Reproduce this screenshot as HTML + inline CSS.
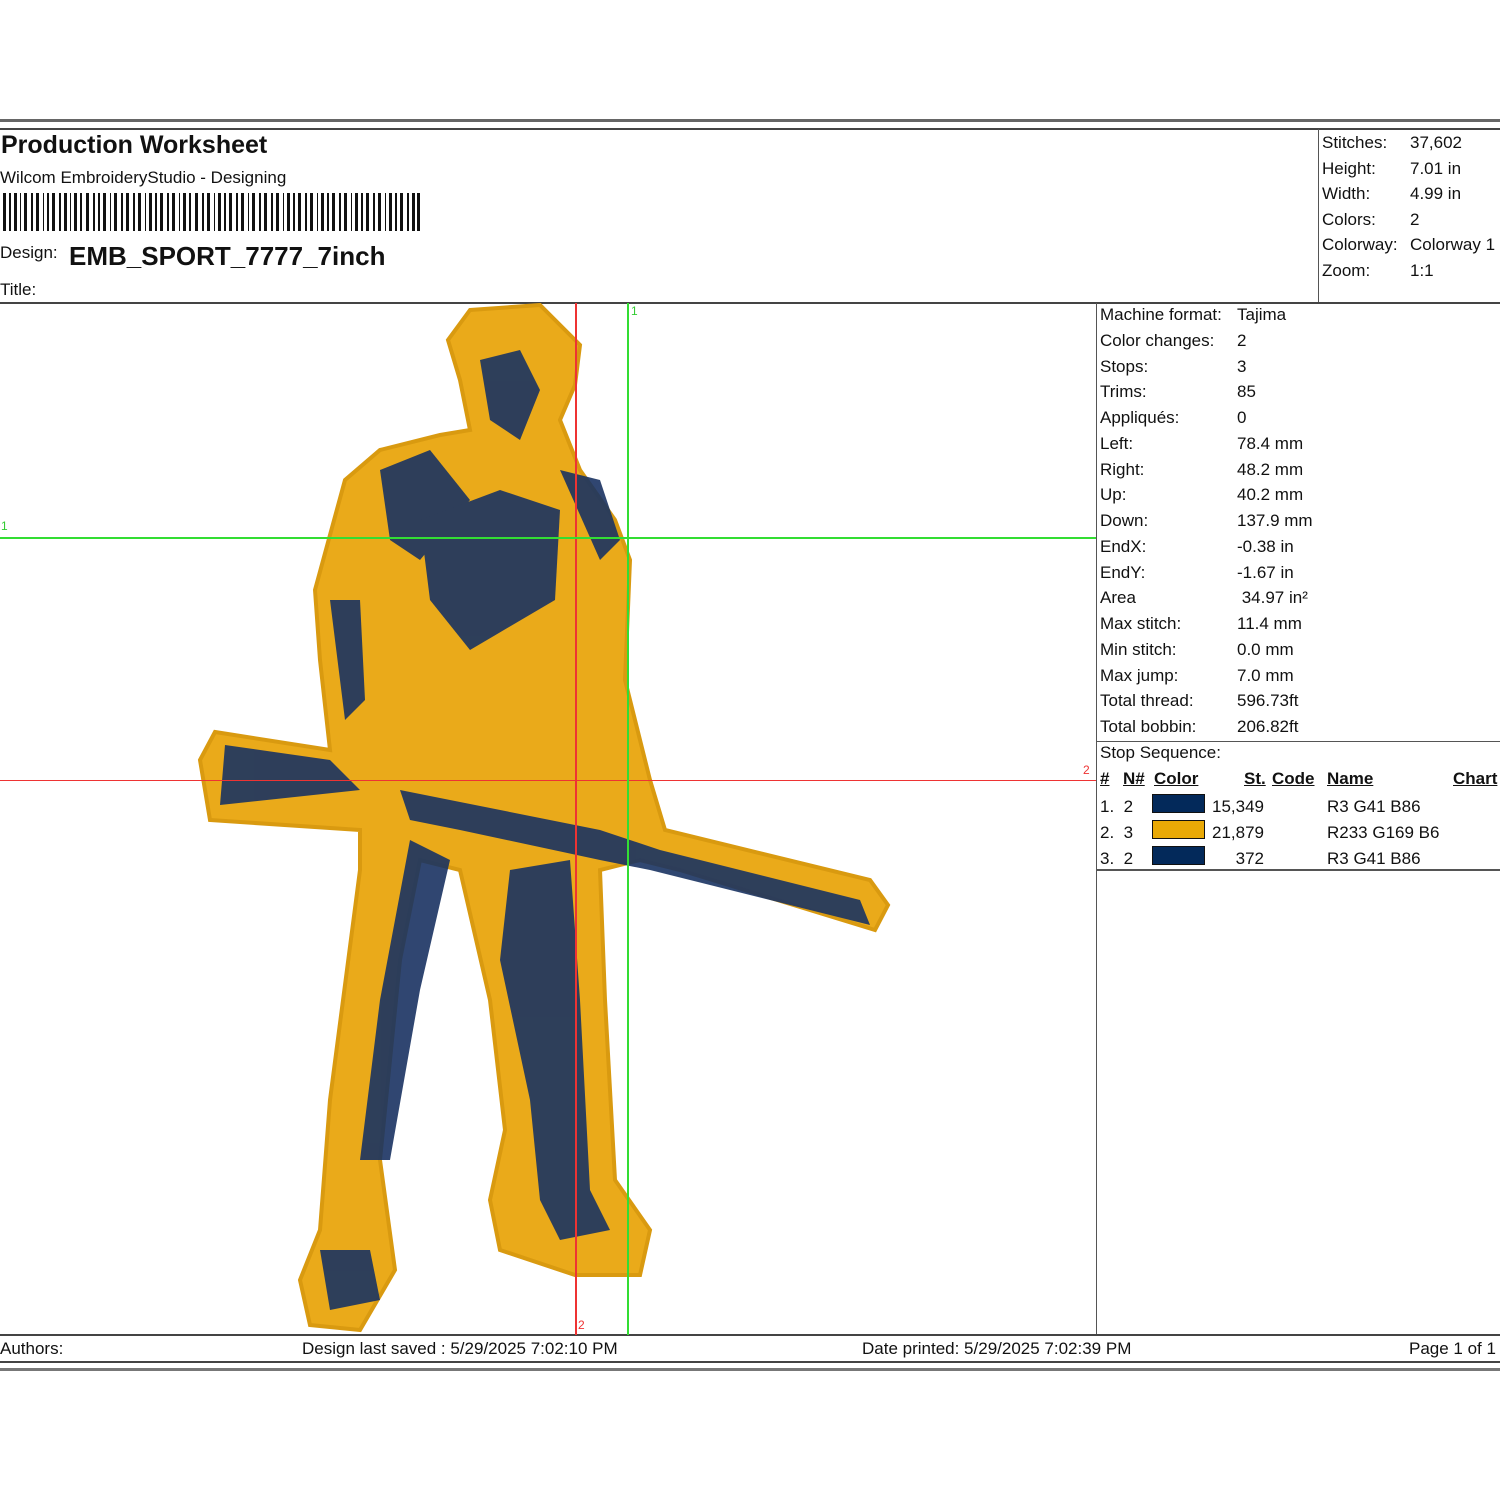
<!DOCTYPE html>
<html><head><meta charset="utf-8"><style>
body{margin:0;width:1500px;height:1495px;background:#fff;position:relative;overflow:hidden;font-family:"Liberation Sans",Arial,sans-serif;color:#111}
.a{position:absolute;white-space:nowrap}
.l{position:absolute;background:#555}
.t{font-size:17px}
u{text-decoration:underline}
</style></head><body>
<div class="l" style="left:0;top:119px;width:1500px;height:3px;background:#666"></div>
<div class="l" style="left:0;top:128px;width:1500px;height:2px;background:#444"></div>
<div class="l" style="left:1318px;top:129px;width:1px;height:175px"></div>
<div class="l" style="left:0;top:302px;width:1500px;height:2px;background:#444"></div>
<div class="l" style="left:1096px;top:303px;width:1px;height:1033px"></div>
<div class="l" style="left:1096px;top:741px;width:404px;height:1px"></div>
<div class="l" style="left:1096px;top:869px;width:404px;height:2px"></div>
<div class="l" style="left:0;top:1334px;width:1500px;height:2px;background:#444"></div>
<div class="l" style="left:0;top:1361px;width:1500px;height:2px;background:#444"></div>
<div class="l" style="left:0;top:1368px;width:1500px;height:3px;background:#777"></div>

<div class="a" style="left:1px;top:131px;font-size:25px;font-weight:bold">Production Worksheet</div>
<div class="a t" style="left:0;top:168px">Wilcom EmbroideryStudio - Designing</div>
<svg class="a" style="left:3px;top:193px" width="418" height="38">
<g fill="#111">
<rect x="0" width="3" height="38"/><rect x="6" width="2" height="38"/><rect x="11" width="3" height="38"/><rect x="17" width="1" height="38"/><rect x="21" width="3" height="38"/><rect x="28" width="2" height="38"/><rect x="33" width="3" height="38"/><rect x="40" width="1" height="38"/><rect x="44" width="2" height="38"/><rect x="49" width="3" height="38"/><rect x="56" width="2" height="38"/><rect x="61" width="3" height="38"/><rect x="67" width="1" height="38"/><rect x="71" width="3" height="38"/><rect x="77" width="2" height="38"/><rect x="83" width="3" height="38"/><rect x="90" width="2" height="38"/><rect x="95" width="2" height="38"/><rect x="100" width="3" height="38"/><rect x="107" width="1" height="38"/><rect x="111" width="3" height="38"/><rect x="118" width="2" height="38"/><rect x="123" width="3" height="38"/><rect x="130" width="2" height="38"/><rect x="135" width="3" height="38"/><rect x="142" width="1" height="38"/><rect x="146" width="3" height="38"/><rect x="152" width="2" height="38"/><rect x="157" width="3" height="38"/><rect x="164" width="2" height="38"/><rect x="169" width="3" height="38"/><rect x="176" width="1" height="38"/><rect x="180" width="3" height="38"/><rect x="186" width="2" height="38"/><rect x="192" width="3" height="38"/><rect x="199" width="2" height="38"/><rect x="204" width="3" height="38"/><rect x="211" width="1" height="38"/><rect x="215" width="3" height="38"/><rect x="221" width="2" height="38"/><rect x="226" width="3" height="38"/><rect x="233" width="2" height="38"/><rect x="238" width="3" height="38"/><rect x="245" width="1" height="38"/><rect x="249" width="3" height="38"/><rect x="256" width="2" height="38"/><rect x="261" width="3" height="38"/><rect x="268" width="2" height="38"/><rect x="273" width="3" height="38"/><rect x="280" width="1" height="38"/><rect x="284" width="3" height="38"/><rect x="290" width="2" height="38"/><rect x="295" width="3" height="38"/><rect x="302" width="2" height="38"/><rect x="307" width="3" height="38"/><rect x="314" width="1" height="38"/><rect x="318" width="3" height="38"/><rect x="324" width="2" height="38"/><rect x="329" width="3" height="38"/><rect x="336" width="2" height="38"/><rect x="341" width="3" height="38"/><rect x="348" width="1" height="38"/><rect x="352" width="3" height="38"/><rect x="358" width="2" height="38"/><rect x="363" width="3" height="38"/><rect x="370" width="2" height="38"/><rect x="375" width="3" height="38"/><rect x="382" width="1" height="38"/><rect x="386" width="3" height="38"/><rect x="392" width="2" height="38"/><rect x="397" width="3" height="38"/><rect x="404" width="2" height="38"/><rect x="409" width="3" height="38"/><rect x="414" width="3" height="38"/>
</g></svg>
<div class="a t" style="left:0;top:243px">Design:</div>
<div class="a" style="left:69px;top:241px;font-size:26px;font-weight:bold">EMB_SPORT_7777_7inch</div>
<div class="a t" style="left:0;top:280px">Title:</div>

<div class="a t" style="left:1322px;top:130px;line-height:25.6px">Stitches:<br>Height:<br>Width:<br>Colors:<br>Colorway:<br>Zoom:</div>
<div class="a t" style="left:1410px;top:130px;line-height:25.6px">37,602<br>7.01 in<br>4.99 in<br>2<br>Colorway 1<br>1:1</div>

<div class="a t" style="left:1100px;top:302px;line-height:25.75px">Machine format:<br>Color changes:<br>Stops:<br>Trims:<br>Appliqués:<br>Left:<br>Right:<br>Up:<br>Down:<br>EndX:<br>EndY:<br>Area<br>Max stitch:<br>Min stitch:<br>Max jump:<br>Total thread:<br>Total bobbin:</div>
<div class="a t" style="left:1237px;top:302px;line-height:25.75px">Tajima<br>2<br>3<br>85<br>0<br>78.4 mm<br>48.2 mm<br>40.2 mm<br>137.9 mm<br>-0.38 in<br>-1.67 in<br>&nbsp;34.97 in²<br>11.4 mm<br>0.0 mm<br>7.0 mm<br>596.73ft<br>206.82ft</div>

<div class="a t" style="left:1100px;top:743px">Stop Sequence:</div>
<div class="a t" style="left:1100px;top:769px;font-weight:bold"><u>#</u></div>
<div class="a t" style="left:1123px;top:769px;font-weight:bold"><u>N#</u></div>
<div class="a t" style="left:1154px;top:769px;font-weight:bold"><u>Color</u></div>
<div class="a t" style="left:1244px;top:769px;font-weight:bold"><u>St.</u></div>
<div class="a t" style="left:1272px;top:769px;font-weight:bold"><u>Code</u></div>
<div class="a t" style="left:1327px;top:769px;font-weight:bold"><u>Name</u></div>
<div class="a t" style="left:1453px;top:769px;font-weight:bold"><u>Chart</u></div>
<div class="a t" style="left:1100px;top:794px;line-height:26px">1.&nbsp; 2<br>2.&nbsp; 3<br>3.&nbsp; 2</div>
<div class="a" style="left:1152px;top:794px;width:51px;height:17px;background:#03295a;border:1px solid #111"></div>
<div class="a" style="left:1152px;top:820px;width:51px;height:17px;background:#e9a906;border:1px solid #111"></div>
<div class="a" style="left:1152px;top:846px;width:51px;height:17px;background:#03295a;border:1px solid #111"></div>
<div class="a t" style="left:1205px;top:794px;line-height:26px;text-align:right;width:59px">15,349<br>21,879<br>372</div>
<div class="a t" style="left:1327px;top:794px;line-height:26px">R3 G41 B86<br>R233 G169 B6<br>R3 G41 B86</div>

<svg class="a" style="left:0;top:303px" width="1096" height="1032">
<g transform="translate(0,-303)">
<path d="M470 310 L540 305 L580 345 L575 385 L560 420 L580 470 L615 520 L630 560 L625 680 L650 780 L665 830 L870 880 L888 905 L875 930 L680 870 L640 860 L600 870 L605 1000 L615 1180 L650 1230 L640 1275 L575 1275 L500 1250 L490 1200 L505 1130 L490 1000 L460 870 L420 860 L400 960 L380 1160 L395 1270 L360 1330 L310 1325 L300 1280 L320 1230 L330 1100 L360 870 L360 830 L210 820 L200 760 L215 732 L330 750 L320 660 L315 590 L345 480 L380 450 L440 435 L470 430 L460 380 L448 340 Z" fill="#eaaa1a" stroke="#d99a10" stroke-width="4"/>
<g fill="#1a3362" opacity="0.9">
<path d="M225 745 L330 760 L360 790 L220 805 Z"/>
<path d="M480 360 L520 350 L540 390 L520 440 L490 420 Z"/>
<path d="M380 470 L430 450 L470 500 L420 560 L390 540 Z"/>
<path d="M420 520 L500 490 L560 510 L555 600 L470 650 L430 600 Z"/>
<path d="M330 600 L360 600 L365 700 L345 720 Z"/>
<path d="M400 790 L450 800 L600 830 L660 850 L860 900 L870 925 L650 870 L600 860 L460 830 L410 820 Z"/>
<path d="M410 840 L450 860 L420 990 L390 1160 L360 1160 L380 1000 Z"/>
<path d="M510 870 L570 860 L580 1000 L590 1190 L610 1230 L560 1240 L540 1200 L530 1100 L500 960 Z"/>
<path d="M320 1250 L370 1250 L380 1300 L330 1310 Z"/>
<path d="M560 470 L600 480 L620 540 L600 560 Z"/>
</g>
</g>
</svg>

<div class="a" style="left:575px;top:303px;width:2px;height:1032px;background:#e33"></div>
<div class="a" style="left:0;top:780px;width:1096px;height:1px;background:#e33"></div>
<div class="a" style="left:627px;top:303px;width:2px;height:1032px;background:#3d3"></div>
<div class="a" style="left:0;top:537px;width:1096px;height:2px;background:#3d3"></div>
<div class="a" style="left:631px;top:304px;font-size:12px;color:#3c3">1</div>
<div class="a" style="left:1px;top:519px;font-size:12px;color:#3c3">1</div>
<div class="a" style="left:1083px;top:763px;font-size:12px;color:#e33">2</div>
<div class="a" style="left:578px;top:1318px;font-size:12px;color:#e33">2</div>

<div class="a t" style="left:0;top:1339px">Authors:</div>
<div class="a t" style="left:302px;top:1339px">Design last saved : 5/29/2025 7:02:10 PM</div>
<div class="a t" style="left:862px;top:1339px">Date printed: 5/29/2025 7:02:39 PM</div>
<div class="a t" style="left:1409px;top:1339px">Page 1 of 1</div>
</body></html>
